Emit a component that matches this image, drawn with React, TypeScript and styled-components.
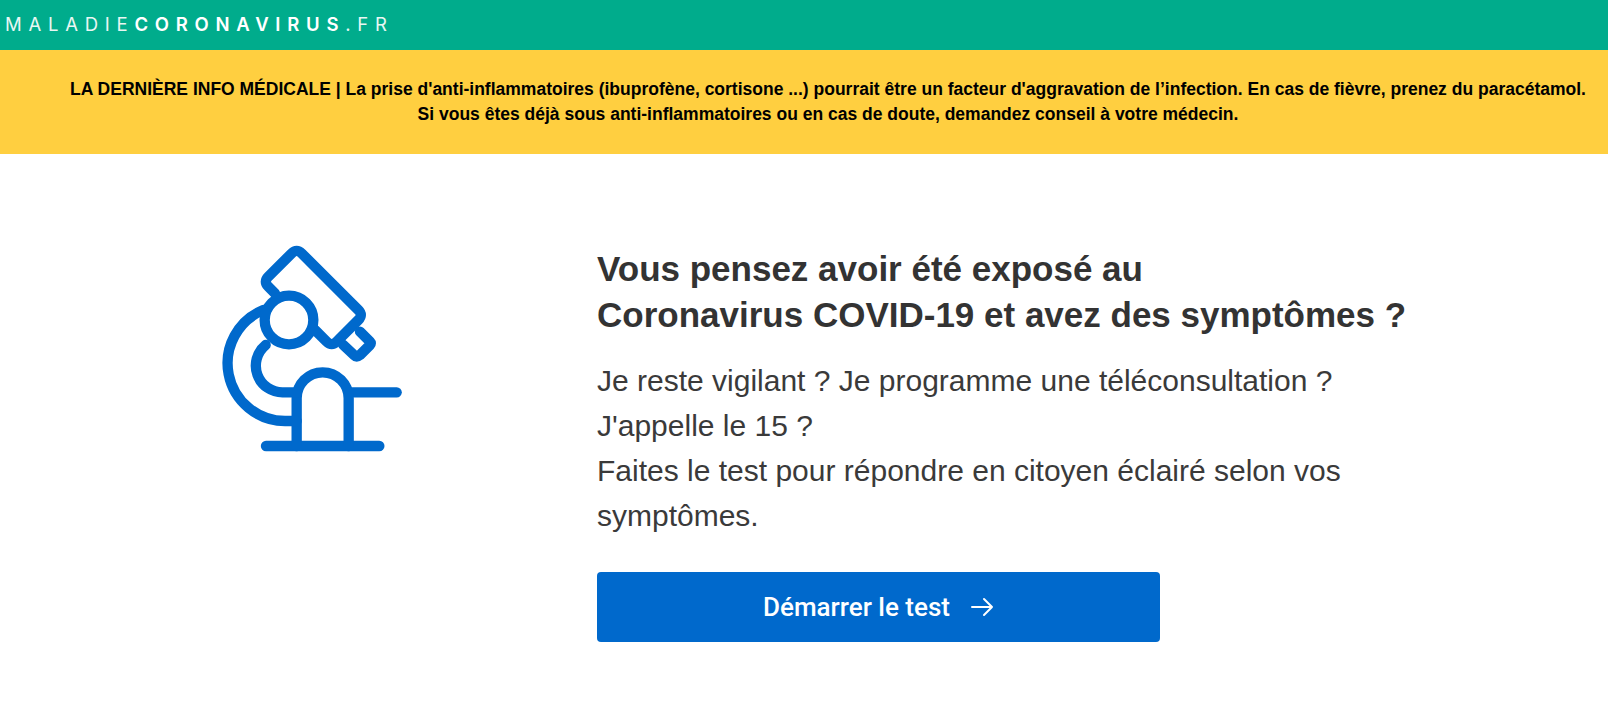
import React from "react";
import styled, { createGlobalStyle } from "styled-components";

const GlobalStyle = createGlobalStyle`
  html, body {
    margin: 0;
    padding: 0;
    background: #fff;
    font-family: "Liberation Sans", Arial, sans-serif;
  }
`;

const Page = styled.div`
  width: 1608px;
  height: 722px;
  overflow: hidden;
`;

const TopBar = styled.header`
  height: 50px;
  background: #00ac8c;
  padding: 14px 0 0 5px;
  box-sizing: border-box;
`;

const Logo = styled.div`
  font-family: Inter, Roboto, sans-serif;
  font-size: 18.5px;
  line-height: 20px;
  letter-spacing: 6.75px;
  color: #e8f7f3;
  font-weight: 400;
  white-space: nowrap;

  strong {
    font-weight: 600;
    color: #fff;
  }
`;

const Banner = styled.div`
  height: 104px;
  box-sizing: border-box;
  background: #ffcf40;
  padding: 27px 0 0 0;
  text-align: center;
  color: #000;
  font-size: 17.5px;
  font-weight: 700;
  line-height: 25px;
  white-space: nowrap;
`;

const BannerText = styled.div`
  margin-left: 48px;
`;

const Hero = styled.main`
  display: flex;
  align-items: flex-start;
  padding: 76px 0 0 200px;
`;

const IconBox = styled.div`
  width: 397px;
  flex: none;
`;

const Content = styled.div`
  width: 840px;
  padding-top: 16px;
`;

const Title = styled.h1`
  margin: 0;
  font-size: 35px;
  line-height: 46px;
  font-weight: 700;
  color: #333;
`;

const Body = styled.p`
  margin: 20px 0 0;
  width: 760px;
  font-size: 30px;
  line-height: 45px;
  color: #3a3a3a;
`;

const StartButton = styled.button`
  display: flex;
  align-items: center;
  justify-content: center;
  gap: 20px;
  width: 563px;
  height: 70px;
  margin-top: 34px;
  padding: 0;
  border: none;
  border-radius: 4px;
  background: #0069cc;
  color: #fff;
  font-family: Roboto, sans-serif;
  font-size: 26px;
  font-weight: 500;
`;

const Microscope = () => (
  <svg
    width="220"
    height="230"
    viewBox="0 0 660 690"
    fill="none"
    stroke="#0069cc"
    strokeWidth="31"
    strokeLinecap="round"
    strokeLinejoin="round"
  >
    <path d="M198 648H538" />
    <path d="M446 487H590" />
    <path d="M290 648V505A78 78 0 0 1 446 505V648" />
    <path d="M197 345A80 80 0 0 0 250 487H290" />
    <path d="M190 240A173 173 0 0 0 255 573H290" />
    <circle cx="267" cy="270" r="73" />
    <path d="M225 190L205 170Q190 155 205 140L275 70Q290 55 305 70L475 240Q490 255 475 270L410 335Q395 350 380 335L345 300" />
    <path d="M480 305L510 335Q515 340 510 345L480 375Q470 383 462 375L430 345" />
  </svg>
);

const ArrowIcon = () => (
  <svg
    width="24"
    height="20"
    viewBox="0 0 24 20"
    fill="none"
    stroke="#fff"
    strokeWidth="2"
    strokeLinecap="round"
    strokeLinejoin="round"
  >
    <path d="M2 10H22M14 2L22 10L14 18" />
  </svg>
);

const App = () => {
  return (
    <Page>
      <GlobalStyle />
      <TopBar>
        <Logo>
          MALADIE<strong>CORONAVIRUS</strong>.FR
        </Logo>
      </TopBar>
      <Banner>
        <BannerText>
          LA DERNIÈRE INFO MÉDICALE | La prise d'anti-inflammatoires (ibuprofène, cortisone ...) pourrait être un
          facteur d'aggravation de l’infection. En cas de fièvre, prenez du paracétamol.
          <br />
          Si vous êtes déjà sous anti-inflammatoires ou en cas de doute, demandez conseil à votre médecin.
        </BannerText>
      </Banner>
      <Hero>
        <IconBox>
          <Microscope />
        </IconBox>
        <Content>
          <Title>
            Vous pensez avoir été exposé au
            <br />
            Coronavirus COVID-19 et avez des symptômes ?
          </Title>
          <Body>
            Je reste vigilant ? Je programme une téléconsultation ?
            <br />
            J'appelle le 15 ?
            <br />
            Faites le test pour répondre en citoyen éclairé selon vos symptômes.
          </Body>
          <StartButton>
            Démarrer le test
            <ArrowIcon />
          </StartButton>
        </Content>
      </Hero>
    </Page>
  );
};

export default App;
